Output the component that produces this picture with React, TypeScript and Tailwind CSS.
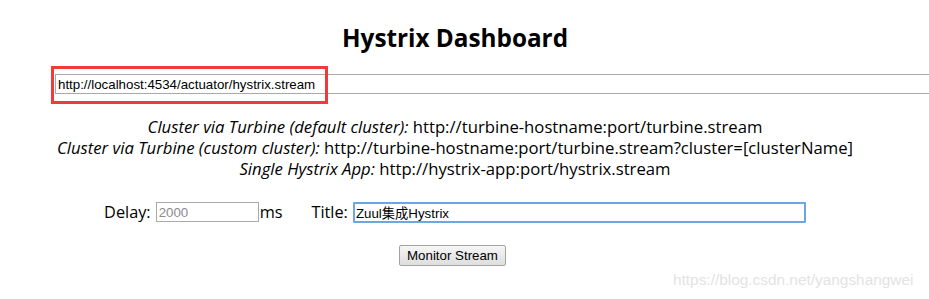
import React from 'react'

const sans = "font-['Open_Sans','Noto_Sans',sans-serif]"
const arial = "font-['Liberation_Sans','Noto_Sans_CJK_SC',sans-serif]"

function ClusterHints() {
  return (
    <div className={`mt-[22px] ${sans} text-[16.7px] leading-[21px] text-black text-center whitespace-nowrap`}>
      <div>
        <i>Cluster via Turbine (default cluster):</i> http://turbine-hostname:port/turbine.stream
      </div>
      <div>
        <i>Cluster via Turbine (custom cluster):</i> http://turbine-hostname:port/turbine.stream?cluster=[clusterName]
      </div>
      <div>
        <i>Single Hystrix App:</i> http://hystrix-app:port/hystrix.stream
      </div>
    </div>
  )
}

export default function App() {
  return (
    <div className="relative h-[299px] w-[929px] overflow-hidden bg-white">
      <div className="ml-[55px] flex w-[800px] flex-col items-center">
        <h2 className={`mt-[22px] ${sans} text-[24.3px] font-bold leading-[32px] text-black`}>
          Hystrix Dashboard
        </h2>

        <input
          readOnly
          value="http://localhost:4534/actuator/hystrix.stream"
          className={`mt-[20px] h-[20px] w-[900px] shrink-0 self-start border border-[#a9a9a9] bg-white px-[2px] ${arial} text-[13.3px] text-black outline-none`}
        />

        <ClusterHints />

        <div className={`mt-[21px] flex items-center ${sans} text-[16.3px] text-black whitespace-nowrap`}>
          <span>Delay:</span>
          <input
            readOnly
            placeholder="2000"
            className={`ml-[5px] h-[20px] w-[103px] border border-[#a9a9a9] bg-white px-[2px] ${arial} text-[13.3px] text-black placeholder:text-[#8c8c8c] outline-none`}
          />
          <span className="ml-px">ms</span>
          <span className="ml-[29px]">Title:</span>
          <input
            readOnly
            value="Zuul集成Hystrix"
            className={`ml-[5px] h-[21px] w-[453px] rounded-[1px] border-2 border-[#6ea6e4] bg-white px-[1px] ${arial} text-[13.3px] text-black outline-none`}
          />
        </div>

        <button
          className={`mt-[21px] mr-[5px] h-[21px] w-[107px] rounded-[2px] border border-[#a3a3a3] bg-gradient-to-b from-[#f6f6f6] to-[#dedede] ${arial} text-[13.3px] text-black`}
        >
          Monitor Stream
        </button>
      </div>

      {/* red highlight drawn over the stream url */}
      <div className="absolute left-[51px] top-[66px] h-[38px] w-[277px] border-[3px] border-[#ee3b3b]" />

      {/* blog watermark */}
      <div className={`absolute left-[673px] top-[271px] ${arial} text-[15.4px] leading-[18px] text-[#e3e3e3]`}>
        https://blog.csdn.net/yangshangwei
      </div>
    </div>
  )
}
